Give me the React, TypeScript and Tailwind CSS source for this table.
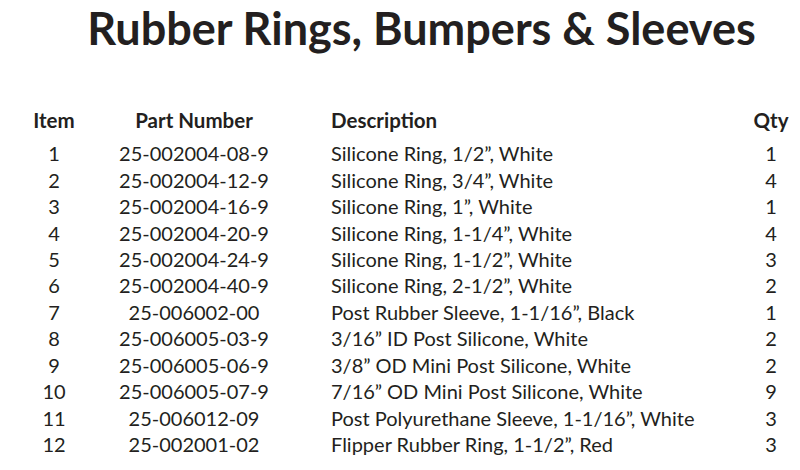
const rows: [string, string, string, string][] = [
  ["1", "25-002004-08-9", "Silicone Ring, 1/2\u201D, White", "1"],
  ["2", "25-002004-12-9", "Silicone Ring, 3/4\u201D, White", "4"],
  ["3", "25-002004-16-9", "Silicone Ring, 1\u201D, White", "1"],
  ["4", "25-002004-20-9", "Silicone Ring, 1-1/4\u201D, White", "4"],
  ["5", "25-002004-24-9", "Silicone Ring, 1-1/2\u201D, White", "3"],
  ["6", "25-002004-40-9", "Silicone Ring, 2-1/2\u201D, White", "2"],
  ["7", "25-006002-00", "Post Rubber Sleeve, 1-1/16\u201D, Black", "1"],
  ["8", "25-006005-03-9", "3/16\u201D ID Post Silicone, White", "2"],
  ["9", "25-006005-06-9", "3/8\u201D OD Mini Post Silicone, White", "2"],
  ["10", "25-006005-07-9", "7/16\u201D OD Mini Post Silicone, White", "9"],
  ["11", "25-006012-09", "Post Polyurethane Sleeve, 1-1/16\u201D, White", "3"],
  ["12", "25-002001-02", "Flipper Rubber Ring, 1-1/2\u201D, Red", "3"],
];

export default function App() {
  return (
    <div className="w-[800px] h-[470px] bg-white text-[#231f20] font-['Lato',sans-serif] overflow-hidden">
      <h1 className="pt-[2px] pl-[43px] text-center text-[45px] leading-[52px] font-bold whitespace-nowrap">
        Rubber Rings, Bumpers &amp; Sleeves
      </h1>

      <div className="mt-[51px] pl-[20px]">
        <div className="grid grid-cols-[68px_212px_452px_38px] h-[26px] items-center text-[20.5px] font-bold mb-[9px]">
          <div className="text-center">Item</div>
          <div className="text-center">Part Number</div>
          <div className="pl-[31px]">Description</div>
          <div className="text-center">Qty</div>
        </div>

        {rows.map(([item, part, desc, qty]) => (
          <div
            key={item}
            className="grid grid-cols-[68px_212px_452px_38px] h-[26.45px] items-center text-[20px] leading-[24px]"
          >
            <div className="text-center">{item}</div>
            <div className="text-center">{part}</div>
            <div className="pl-[31px] whitespace-nowrap">{desc}</div>
            <div className="text-center">{qty}</div>
          </div>
        ))}
      </div>
    </div>
  );
}
